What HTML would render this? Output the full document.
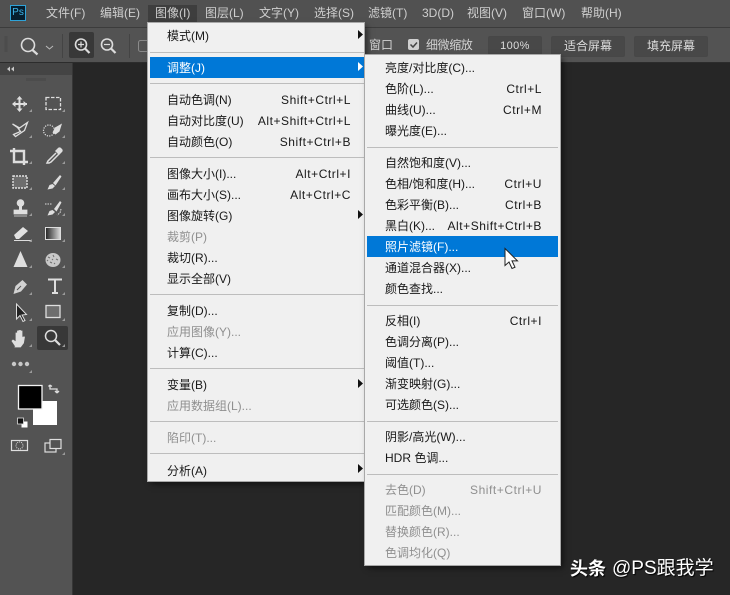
<!DOCTYPE html>
<html><head><meta charset="utf-8">
<style>
html,body{margin:0;padding:0}
body{width:730px;height:595px;overflow:hidden;position:relative;background:#262626;font-family:"Liberation Sans","Noto Sans CJK SC",sans-serif;font-size:12px;color:#181818}
.a{position:absolute}
.t{position:absolute;white-space:nowrap;line-height:20px;height:20px}
.m{position:absolute;white-space:nowrap;line-height:20px;top:3px;color:#cfcfcf;font-size:12px}
.o{position:absolute;white-space:nowrap;line-height:18px;color:#d2d2d2;font-size:12px}
.b{position:absolute;top:36px;height:19px;background:#484848;border:1px solid #474747;border-radius:2px;color:#dcdcdc;text-align:center;line-height:18px;font-size:12px}
.menu{position:absolute;background:#f0f0f0;box-shadow:0 0 0 1px #a8a8a8,3px 3px 6px rgba(0,0,0,.55)}
.s{position:absolute;height:1px;background:#bdbdbd}
.g{color:#8f8f8f}
.r{position:absolute;white-space:nowrap;line-height:20px;height:20px;text-align:right;letter-spacing:.55px}
.hl{position:absolute;background:#0078d7}
</style></head><body>
<div class="a" style="left:0;top:0;width:730px;height:28px;background:#515151"></div>
<div class="a" style="left:0;top:27px;width:730px;height:1px;background:#3c3c3c"></div>
<div class="a" style="left:0;top:28px;width:730px;height:34px;background:#535353"></div>
<div class="a" style="left:0;top:62px;width:730px;height:1px;background:#2c2c2c"></div>
<div class="a" style="left:0;top:63px;width:72px;height:532px;background:#535353"></div>
<div class="a" style="left:0;top:63px;width:72px;height:12px;background:#444"></div>
<div class="a" style="left:72px;top:63px;width:1px;height:532px;background:#363636"></div>

<div class="a" style="left:10px;top:5px;width:14px;height:14px;border:1px solid #2fa3d8;background:#061e2e;color:#3fb6ea;font-size:10px;line-height:14px;text-align:center">Ps</div>
<div class="m" style="left:46px">文件(F)</div>
<div class="m" style="left:100px">编辑(E)</div>
<div class="a" style="left:148px;top:5px;width:49px;height:18px;background:#3e3e3e"></div>
<div class="m" style="left:155px">图像(I)</div>
<div class="m" style="left:205px">图层(L)</div>
<div class="m" style="left:259px">文字(Y)</div>
<div class="m" style="left:314px">选择(S)</div>
<div class="m" style="left:368px">滤镜(T)</div>
<div class="m" style="left:422px">3D(D)</div>
<div class="m" style="left:467px">视图(V)</div>
<div class="m" style="left:522px">窗口(W)</div>
<div class="m" style="left:581px">帮助(H)</div>

<div class="a" style="left:69px;top:32px;width:25px;height:26px;background:#383838;border-radius:2px"></div>
<div class="o" style="left:369px;top:36px">窗口</div>
<div class="a" style="left:408px;top:39px;width:11px;height:11px;background:#d0d0d0;border-radius:2px"></div>
<div class="o" style="left:426px;top:36px;letter-spacing:-.4px">细微缩放</div>
<div class="b" style="left:488px;width:52px;font-size:11px;letter-spacing:.4px">100%</div>
<div class="b" style="left:551px;width:72px">适合屏幕</div>
<div class="b" style="left:634px;width:72px">填充屏幕</div>

<svg class="a" style="left:0;top:0" width="730" height="595" viewBox="0 0 730 595" fill="none">
<!-- options -->
<g stroke="#444"><path d="M4.500 37h3M4.500 39h3M4.500 41h3M4.500 43h3M4.500 45h3M4.500 47h3M4.500 49h3M4.500 51h3"/></g>
<path d="M62.500 34v24M129.500 34v24" stroke="#444"/>
<g stroke="#dcdcdc" stroke-width="1.600">
<circle cx="28" cy="45" r="6.500"/><path d="M32.500 50l5 4.500" stroke-width="2.200"/>
<path d="M46 46l3.500 3 3.500-3" stroke-width="1" stroke="#bbb"/>
<circle cx="81" cy="44.500" r="5.500"/><path d="M85 48.500l4.500 4.500" stroke-width="2.200"/><path d="M78 44.500h6M81 41.500v6" stroke-width="1.200"/>
<circle cx="107" cy="44.500" r="5.500"/><path d="M111 48.500l4.500 4.500" stroke-width="2.200"/><path d="M104 44.500h6" stroke-width="1.200"/>
</g>
<rect x="138.500" y="40.500" width="10" height="11" rx="2" stroke="#8a8a8a"/>
<path d="M410.500 44.500l2.500 2.500 4-4.500" stroke="#444" stroke-width="1.500"/>
<!-- panel header -->
<path d="M10 66.500l-3 2.500 3 2.500zM14 66.500l-3 2.500 3 2.500z" fill="#c8c8c8"/>
<path d="M27 78v3M29 78v3M31 78v3M33 78v3M35 78v3M37 78v3M39 78v3M41 78v3M43 78v3M45 78v3" stroke="#444"/>
<!-- tool icons -->
<g fill="#dedede" stroke="#dedede">
<path d="M19.500 97v14M13 104h14" stroke-width="2"/><path d="M19.500 96l3 3.500h-6zM19.500 112l3-3.500h-6zM12 104l3.500-3v6zM27 104l-3.500-3v6z" stroke="none"/>
</g>
<rect x="46" y="97.500" width="14.500" height="12" stroke="#dedede" stroke-width="1.300" stroke-dasharray="3.500 1.500"/>
<path d="M12.500 124l7 4 8-5.500-3 8-9 6-2-2 7-3-3-4z" stroke="#dedede" stroke-width="1.300"/>
<circle cx="49" cy="130.500" r="5.500" stroke="#e2e2e2" stroke-dasharray="1.200 1.200" stroke-width="1.200"/>
<path d="M62 123.500l-7 4-2.500 5 3 2 4-3z" fill="#dedede"/>
<path d="M14 148v14h14M10 151h14v14" stroke="#dedede" stroke-width="2.400"/>
<path d="M61 148l1 1a2 2 0 0 1 0 3l-3 3-4-4 3-3a2 2 0 0 1 3 0z" fill="#dedede"/><path d="M56 153l-8 8-1 2 2 0 2-1 8-8" stroke="#dedede" stroke-width="1.500"/>
<rect x="13" y="176" width="14" height="12" fill="#6e6e6e" stroke="#e2e2e2" stroke-width="1.400" stroke-dasharray="2 1"/>
<path d="M60 175l-7 8 2.500 2.500 6-9zM52.500 184l-3 1-2 4.500 5-1 2.500-2.500z" fill="#dedede"/>
<circle cx="20.500" cy="203" r="3.800" fill="#dedede"/><path d="M14 210h13v4h-13zM14 216h13" fill="#dedede" stroke="#dedede" stroke-width=".8"/><path d="M19 206h3v4h-3z" fill="#dedede"/>
<path d="M60 201l-6 8 2.500 2.500 5-9zM52.500 210l-3 1-2 4.500 5-1 2.500-2.500z" fill="#dedede"/><path d="M45 204h7M61 209l-1 4-3 2" stroke="#ddd" stroke-dasharray="1.500 1"/>
<path d="M14 235l9-8 5 4-9 8h-3z" fill="#e2e2e2"/><path d="M14 240.500h17" stroke="#ddd"/>
<defs><linearGradient id="gr"><stop offset="0" stop-color="#222"/><stop offset="1" stop-color="#ddd"/></linearGradient></defs>
<rect x="45.500" y="227.500" width="15" height="12" fill="url(#gr)" stroke="#ddd"/>
<path d="M20.500 251l7 16h-14z" fill="#dedede"/>
<ellipse cx="53" cy="260" rx="7.500" ry="7" fill="#c8c8c8"/><path d="M48 257l2 1M53 255l1 2M56 259l2 1M50 262l2 1M54 263l1 1M47 260l1 1M52 259l1 1" stroke="#6e6e6e"/>
<path d="M13.500 294l2-8 7-6 4.500 4.500-6 7z" fill="#d2d2d2"/><path d="M17 290l4-4" stroke="#555"/>
<path d="M48 279.500h14M55 280v13M52 293h6" stroke="#dedede" stroke-width="2"/>
<path d="M16.500 304v15l3.500-3.500 3 6 2-1-3-5.500 4.500-.5z" fill="#222" stroke="#ddd"/>
<rect x="46" y="305.500" width="14" height="12" fill="#6e6e6e" stroke="#dedede" stroke-width="1.300"/>
<rect x="37" y="326" width="31" height="24" rx="2" fill="#383838"/>
<path d="M16 347l-4-6 1-1 3 2v-9h1.500v5-7h1.500v7-7.500h1.500v7.500-7h1.500v8l1-2h1.500l-1 6-3 4h-6z" fill="#dedede" stroke="#dedede" stroke-width=".8"/>
<circle cx="51" cy="336" r="5.500" stroke="#dedede" stroke-width="1.500"/><path d="M55 340l5 5" stroke="#dedede" stroke-width="2.200"/>
<g fill="#c8c8c8"><circle cx="14" cy="364" r="2.200"/><circle cx="20.500" cy="364" r="2.200"/><circle cx="27" cy="364" r="2.200"/></g>
<g fill="#9a9a9a"><path d="M32 112h-3l3-3zM65 112h-3l3-3zM32 138h-3l3-3zM65 138h-3l3-3zM32 164h-3l3-3zM65 164h-3l3-3zM32 190h-3l3-3zM65 190h-3l3-3zM32 216h-3l3-3zM65 216h-3l3-3zM32 242h-3l3-3zM65 242h-3l3-3zM32 268h-3l3-3zM65 268h-3l3-3zM32 295h-3l3-3zM65 295h-3l3-3zM32 321h-3l3-3zM65 321h-3l3-3zM32 347h-3l3-3zM65 347h-3l3-3zM32 373h-3l3-3zM65 455h-3l3-3z"/></g>
<!-- swatches -->
<rect x="33" y="401" width="24" height="24" fill="#fff"/>
<rect x="18.500" y="385.500" width="23.500" height="23.500" fill="#000" stroke="#f2f2f2" stroke-width="1.300"/>
<path d="M50 385v4h7v4M50 385l-1.500 1.500M50 385l2 1.500M57 393l-2-2M57 393l2-2" stroke="#dedede" stroke-width="1.300"/>
<rect x="21.500" y="421.500" width="6" height="6" fill="#fff"/><rect x="17.500" y="418" width="6" height="6" fill="#111" stroke="#ddd" stroke-width=".8"/>
<rect x="11.500" y="440.500" width="16" height="10" stroke="#dedede" stroke-width="1.200"/><circle cx="19.500" cy="445.500" r="3.500" stroke="#ddd" stroke-dasharray="1 1"/>
<rect x="45" y="443" width="11" height="9" stroke="#dedede" stroke-width="1.200"/><rect x="50" y="439.500" width="11" height="9" fill="#535353" stroke="#dedede" stroke-width="1.200"/>
</svg>

<!-- menu 1 -->
<div class="menu" style="left:148px;top:23px;width:216px;height:458px"></div>
<div class="hl" style="left:150px;top:57px;width:214px;height:21px"></div>
<div class="s" style="left:150px;top:52px;width:214px"></div>
<div class="s" style="left:150px;top:83px;width:214px"></div>
<div class="s" style="left:150px;top:157px;width:214px"></div>
<div class="s" style="left:150px;top:294px;width:214px"></div>
<div class="s" style="left:150px;top:368px;width:214px"></div>
<div class="s" style="left:150px;top:421px;width:214px"></div>
<div class="s" style="left:150px;top:453px;width:214px"></div>
<div class="t" style="left:167px;top:26px">模式(M)</div>
<div class="t" style="left:167px;top:58px;color:#fff">调整(J)</div>
<div class="t" style="left:167px;top:90px">自动色调(N)</div><div class="r" style="right:379px;top:90px">Shift+Ctrl+L</div>
<div class="t" style="left:167px;top:111px">自动对比度(U)</div><div class="r" style="right:379px;top:111px">Alt+Shift+Ctrl+L</div>
<div class="t" style="left:167px;top:132px">自动颜色(O)</div><div class="r" style="right:379px;top:132px">Shift+Ctrl+B</div>
<div class="t" style="left:167px;top:164px">图像大小(I)...</div><div class="r" style="right:379px;top:164px">Alt+Ctrl+I</div>
<div class="t" style="left:167px;top:185px">画布大小(S)...</div><div class="r" style="right:379px;top:185px">Alt+Ctrl+C</div>
<div class="t" style="left:167px;top:206px">图像旋转(G)</div>
<div class="t g" style="left:167px;top:227px">裁剪(P)</div>
<div class="t" style="left:167px;top:248px">裁切(R)...</div>
<div class="t" style="left:167px;top:269px">显示全部(V)</div>
<div class="t" style="left:167px;top:301px">复制(D)...</div>
<div class="t g" style="left:167px;top:322px">应用图像(Y)...</div>
<div class="t" style="left:167px;top:343px">计算(C)...</div>
<div class="t" style="left:167px;top:375px">变量(B)</div>
<div class="t g" style="left:167px;top:396px">应用数据组(L)...</div>
<div class="t g" style="left:167px;top:428px">陷印(T)...</div>
<div class="t" style="left:167px;top:461px">分析(A)</div>

<!-- menu 2 -->
<div class="menu" style="left:365px;top:55px;width:195px;height:510px"></div>
<div class="hl" style="left:367px;top:236px;width:191px;height:21px"></div>
<div class="s" style="left:367px;top:147px;width:191px"></div>
<div class="s" style="left:367px;top:305px;width:191px"></div>
<div class="s" style="left:367px;top:421px;width:191px"></div>
<div class="s" style="left:367px;top:474px;width:191px"></div>
<div class="t" style="left:385px;top:58px">亮度/对比度(C)...</div>
<div class="t" style="left:385px;top:79px">色阶(L)...</div><div class="r" style="right:188px;top:79px">Ctrl+L</div>
<div class="t" style="left:385px;top:100px">曲线(U)...</div><div class="r" style="right:188px;top:100px">Ctrl+M</div>
<div class="t" style="left:385px;top:121px">曝光度(E)...</div>
<div class="t" style="left:385px;top:153px">自然饱和度(V)...</div>
<div class="t" style="left:385px;top:174px">色相/饱和度(H)...</div><div class="r" style="right:188px;top:174px">Ctrl+U</div>
<div class="t" style="left:385px;top:195px">色彩平衡(B)...</div><div class="r" style="right:188px;top:195px">Ctrl+B</div>
<div class="t" style="left:385px;top:216px">黑白(K)...</div><div class="r" style="right:188px;top:216px">Alt+Shift+Ctrl+B</div>
<div class="t" style="left:385px;top:237px;color:#fff">照片滤镜(F)...</div>
<div class="t" style="left:385px;top:258px">通道混合器(X)...</div>
<div class="t" style="left:385px;top:279px">颜色查找...</div>
<div class="t" style="left:385px;top:311px">反相(I)</div><div class="r" style="right:188px;top:311px">Ctrl+I</div>
<div class="t" style="left:385px;top:332px">色调分离(P)...</div>
<div class="t" style="left:385px;top:353px">阈值(T)...</div>
<div class="t" style="left:385px;top:374px">渐变映射(G)...</div>
<div class="t" style="left:385px;top:395px">可选颜色(S)...</div>
<div class="t" style="left:385px;top:427px">阴影/高光(W)...</div>
<div class="t" style="left:385px;top:448px">HDR 色调...</div>
<div class="t g" style="left:385px;top:480px">去色(D)</div><div class="r g" style="right:188px;top:480px">Shift+Ctrl+U</div>
<div class="t g" style="left:385px;top:501px">匹配颜色(M)...</div>
<div class="t g" style="left:385px;top:522px">替换颜色(R)...</div>
<div class="t g" style="left:385px;top:543px">色调均化(Q)</div>

<svg class="a" style="left:0;top:0" width="730" height="595" viewBox="0 0 730 595">
<path d="M358 30l5 4.500-5 4.500zM358 379l5 4.500-5 4.500zM358 210l5 4.500-5 4.500zM358 464l5 4.500-5 4.500z" fill="#111"/>
<path d="M358 62l5 4.500-5 4.500z" fill="#fff"/>
<path d="M505 248.500v17l4-3.500 3 6.500 3-1.300-3-6.300h5.500z" fill="#fff" stroke="#222" stroke-width="1"/>
</svg>

<div class="a" style="left:570px;top:557px;white-space:nowrap;line-height:24px;font-size:18px;color:#fff;text-shadow:1px 1px 1px #000"><b>头条</b></div>
<div class="a" style="left:612px;top:557px;white-space:nowrap;line-height:24px;font-size:19px;color:#fff;text-shadow:1px 1px 1px #000">@PS跟我学</div>
</body></html>
